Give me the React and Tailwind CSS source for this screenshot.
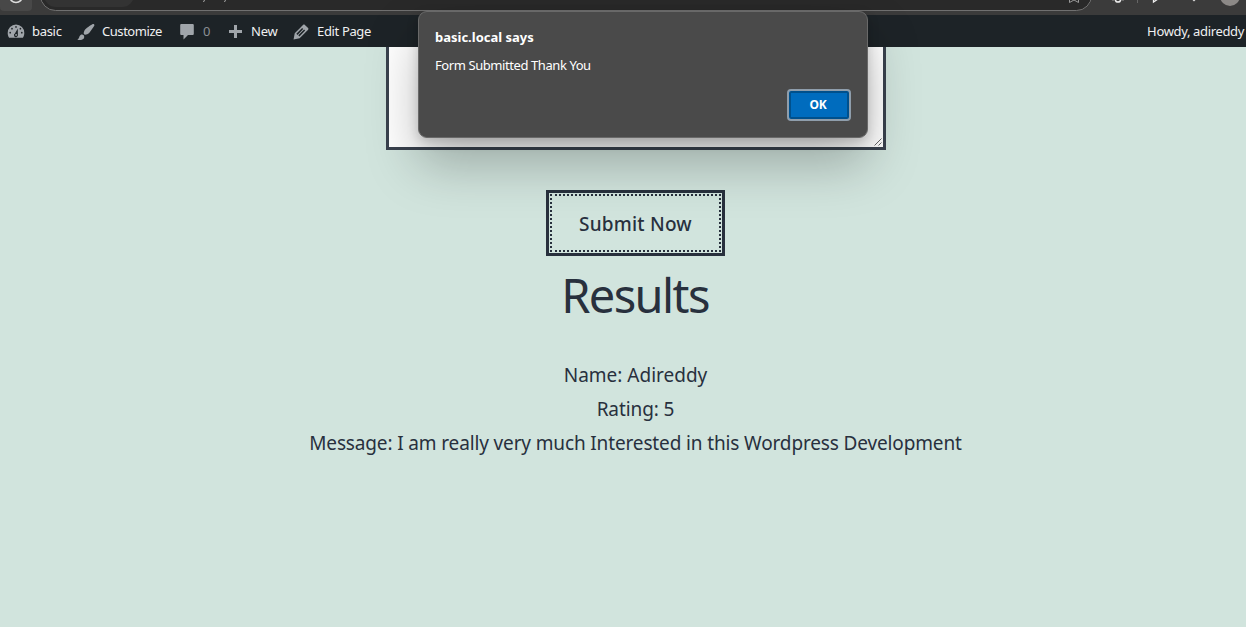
function Gauge() {
  return (
    <svg viewBox="0 0 20 20" className="mt-px block size-5 shrink-0">
      <path fill="#a0a5aa" d="M10 2.500a8.300 8.300 0 0 0-8.300 8.500c0 1.800.5 3.400 1.400 4.700h13.800c.9-1.300 1.400-2.900 1.400-4.700A8.300 8.300 0 0 0 10 2.500z" />
      <g fill="#1d2327">
        <circle cx="10" cy="4.900" r="0.850" />
        <circle cx="6" cy="6.700" r="0.850" />
        <circle cx="4.200" cy="10.700" r="0.850" />
        <circle cx="15.800" cy="10.700" r="0.850" />
        <circle cx="14.400" cy="6.700" r="0.850" />
      </g>
      <path d="M11.800 6.500 11.900 12.600a2 2 0 1 1-3-1.200z" fill="#1d2327" />
      <circle cx="10.100" cy="12.900" r="0.900" fill="#a0a5aa" />
    </svg>
  );
}

function Brush() {
  return (
    <svg viewBox="0 0 20 20" className="mt-px block size-5 shrink-0" fill="#a0a5aa">
      <path d="M18.330 3.570s.27-.8-.31-1.360c-.53-.52-1.220-.24-1.220-.24-.61.300-5.760 3.470-7.670 5.570-.86.960-2.060 3.790-1.090 4.820.92.980 3.960-.17 4.790-1 2.060-2.060 5.210-7.170 5.500-7.790zM1.400 17.650c2.370-1.560 1.460-3.410 3.230-4.640.93-.65 2.220-.62 3.080.29.630.67.800 2.570-.16 3.460-1.570 1.450-4 1.550-6.150.89z" />
    </svg>
  );
}

function Bubble() {
  return (
    <svg viewBox="0 0 20 20" className="mt-0.5 block size-5 shrink-0" fill="#a0a5aa">
      <path d="M4.500 2h11c.8 0 1.300.5 1.300 1.300v8.400c0 .8-.5 1.300-1.300 1.300H11l-4.500 4.500V13h-2c-.8 0-1.300-.5-1.300-1.300V3.300C3.200 2.500 3.700 2 4.500 2z" />
    </svg>
  );
}

function Plus() {
  return (
    <svg viewBox="0 0 20 20" className="mt-0.5 block size-5 shrink-0" fill="#a0a5aa">
      <path d="M17 8v3h-5v5H9v-5H4V8h5V3h3v5h5z" />
    </svg>
  );
}

function Pencil() {
  return (
    <svg viewBox="0 0 20 20" className="mt-px block size-5 shrink-0" fill="#a0a5aa">
      <path d="M13.890 2.900l3.200 3.210c.46.460.42 1.240.030 1.640l-8.500 8.520-6.060 1.160 1.160-6.080s8.100-8.130 8.490-8.530c.39-.39 1.220-.39 1.680.080zm-2.730 3.080l-5.790 5.810 1.110 1.110 5.740-5.850zm-2.770 8.430l5.780-5.800-1.070-1.080-5.790 5.800z" />
    </svg>
  );
}

function BrowserStrip() {
  return (
    <div className="h-[15px] shrink-0 overflow-hidden bg-[#3b3b3b]">
      <svg width="1246" height="15" className="block">
        <rect x="0" y="-10" width="32" height="21" rx="4" fill="#484848" />
        <circle cx="16" cy="-4" r="6.500" fill="none" stroke="#ddd" strokeWidth="1.500" />
        <rect x="40.500" y="-20" width="1051" height="30.500" rx="15" fill="#292929" stroke="#707070" />
        <rect x="44" y="-18" width="90" height="25" rx="12" fill="#333" />
        <path d="M204.500 0l-1 2M225.500 0l-1 2" stroke="#aaa" />
        <path d="M1069.500 -2v4.500l4.500-2.500 4.500 2.500v-4.500" fill="none" stroke="#999" />
        <path d="M1112 -0.500h3.500l.5 2q2 1 4 0l.5-2h3.500" fill="none" stroke="#eee" strokeWidth="1.500" />
        <path d="M1137.500 0v3" stroke="#666" />
        <path d="M1153.500 -2v4l6-4" fill="none" stroke="#eee" strokeWidth="1.300" />
        <path d="M1192 -0.500l2 2 2-2z" fill="#ddd" />
        <circle cx="1230" cy="-4" r="10" fill="#8c8987" />
      </svg>
    </div>
  );
}

function AdminBar() {
  return (
    <nav className="flex h-8 shrink-0 items-center bg-[#1d2327] pl-1.5 text-[13px] leading-8 whitespace-nowrap text-[#f0f0f1]">
      <a className="flex w-[70px] items-center gap-1.5"><Gauge /><span className="tracking-[-0.3px]">basic</span></a>
      <a className="flex w-[101px] items-center gap-1.5"><Brush /><span className="tracking-[-0.45px]">Customize</span></a>
      <a className="flex w-[48px] items-center gap-1.5 text-[#8b8f94]"><Bubble /><span>0</span></a>
      <a className="flex w-[66px] items-center gap-1.5"><Plus /><span className="tracking-[-0.2px]">New</span></a>
      <a className="flex items-center gap-1.5"><Pencil /><span className="tracking-[-0.35px]">Edit Page</span></a>
      <span className="mr-0.5 ml-auto tracking-[-0.35px]">Howdy, adireddy</span>
    </nav>
  );
}

function AlertDialog() {
  return (
    <div className="absolute top-[11px] left-[418px] flex h-[127px] w-[450px] flex-col rounded-[9px] border border-[#696969] bg-[#4a4a4a] px-4 pt-[15px] pb-4 text-[13px] leading-5 text-white shadow-[0_26px_52px_rgba(0,0,0,0.26),0_4px_12px_rgba(0,0,0,0.18)]">
      <strong>basic.local says</strong>
      <p className="mt-2 tracking-[-0.42px]">Form Submitted Thank You</p>
      <button className="mt-auto h-8 w-16 self-end rounded-[4px] border-2 border-[#8f9eac] bg-[#006cbe] pr-0.5 text-xs font-bold tracking-[-0.3px] shadow-[inset_0_0_0_2px_#00508c]">OK</button>
    </div>
  );
}

export default function App() {
  return (
    <div className="relative flex h-[627px] w-[1246px] flex-col overflow-hidden bg-[#d1e4dd] font-['Noto_Sans',sans-serif] text-[#28303d]">
      <BrowserStrip />
      <AdminBar />
      <main className="flex flex-col items-center pl-[26px] text-center text-[19px] leading-[34px]">
        <div className="flex h-[103px] w-[500px] items-end justify-end border-3 border-t-0 border-[#39414d] bg-white">
          <svg width="10" height="10" className="block" stroke="#555" strokeWidth="0.900"><path d="M1.500 8.500l7-7M5.500 8.500l3-3" /></svg>
        </div>
        <button className="mt-10 mr-px h-[66px] w-[179px] border-3 border-[#28303d] p-px">
          <span className="flex h-full items-center justify-center border-2 border-dotted border-[#28303d] pt-0.5 font-medium tracking-[0.2px]">Submit Now</span>
        </button>
        <h1 className="mt-1 mr-0.5 text-[47px] leading-[70px] font-normal tracking-[-1.600px]">Results</h1>
        <div className="mt-[28px] mr-px">
          <p>Name: Adireddy</p>
          <p className="tracking-[-0.1px]">Rating: 5</p>
          <p className="tracking-[-0.14px]">Message: I am really very much Interested in this Wordpress Development</p>
        </div>
      </main>
      <AlertDialog />
    </div>
  );
}
